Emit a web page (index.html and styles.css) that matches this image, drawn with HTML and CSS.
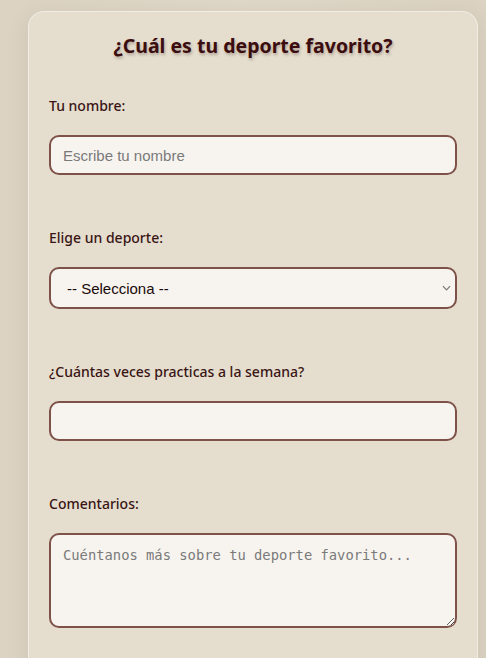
FILE: index.html
```html
<!DOCTYPE html>
<html lang="es">
<head>
<meta charset="utf-8">
<title>Deporte favorito</title>
<link rel="stylesheet" href="styles.css">
</head>
<body>
<form class="card">
  <h2 class="title">¿Cuál es tu deporte favorito?</h2>
  <div class="group">
    <label class="label" for="nombre">Tu nombre:</label>
    <input class="field" id="nombre" type="text" placeholder="Escribe tu nombre">
  </div>
  <div class="group">
    <label class="label" for="deporte">Elige un deporte:</label>
    <select class="field select" id="deporte">
      <option>-- Selecciona --</option>
      <option>Fútbol</option>
      <option>Baloncesto</option>
      <option>Tenis</option>
    </select>
  </div>
  <div class="group">
    <label class="label" for="veces">¿Cuántas veces practicas a la semana?</label>
    <input class="field" id="veces" type="number">
  </div>
  <div class="group">
    <label class="label" for="comentarios">Comentarios:</label>
    <textarea class="field area" id="comentarios" placeholder="Cuéntanos más sobre tu deporte favorito..."></textarea>
  </div>
</form>
</body>
</html>
```
FILE: styles.css
```css
html, body {
  margin: 0;
  padding: 0;
}
body {
  background: linear-gradient(90deg, #dcd3c3 0%, #e0d8c9 50%, #dcd3c3 100%);
  min-height: 658px;
  font-family: "Noto Sans", "Open Sans", sans-serif;
  overflow: hidden;
}
.card {
  box-sizing: border-box;
  width: 450px;
  margin: 11px 0 0 28px;
  padding: 20px 20px 60px;
  background: #e5decf;
  border: 1px solid rgba(255, 255, 255, 0.45);
  border-radius: 16px;
  box-shadow: 0 4px 22px rgba(90, 70, 40, 0.12);
  display: flex;
  flex-direction: column;
  gap: 35px;
}
.title {
  margin: 0;
  text-align: center;
  font-size: 19.5px;
  line-height: 28px;
  font-weight: 700;
  color: #3b0d0f;
  text-shadow: 1px 2px 3px rgba(60, 30, 20, 0.3);
}
.group {
  display: flex;
  flex-direction: column;
  gap: 19px;
  margin-bottom: 17px;
}
.label {
  font-size: 14px;
  line-height: 21px;
  font-weight: 500;
  color: #3a1414;
}
.field {
  box-sizing: border-box;
  width: 100%;
  height: 40px;
  padding: 0 12px;
  border: 2px solid #7e5149;
  border-radius: 10px;
  background-color: #f7f4ef;
  font-family: "Liberation Sans", Arial, sans-serif;
  font-size: 15px;
  color: #2a1010;
}
.field::placeholder {
  color: #7a7a7a;
}
.select {
  height: 42px;
  padding-left: 16px;
  color: #1a0a0a;
  appearance: none;
  -webkit-appearance: none;
  background-image: url("data:image/svg+xml;utf8,<svg xmlns='http://www.w3.org/2000/svg' width='10' height='6' viewBox='0 0 10 6'><path d='M1 1l4 4 4-4' fill='none' stroke='%23777' stroke-width='1.3'/></svg>");
  background-repeat: no-repeat;
  background-position: right 4px center;
  background-size: 9px 6px;
}
.area {
  height: 95px;
  padding: 12px;
  font-family: "DejaVu Sans Mono", "Liberation Mono", monospace;
  font-size: 13.8px;
  resize: vertical;
}
```
